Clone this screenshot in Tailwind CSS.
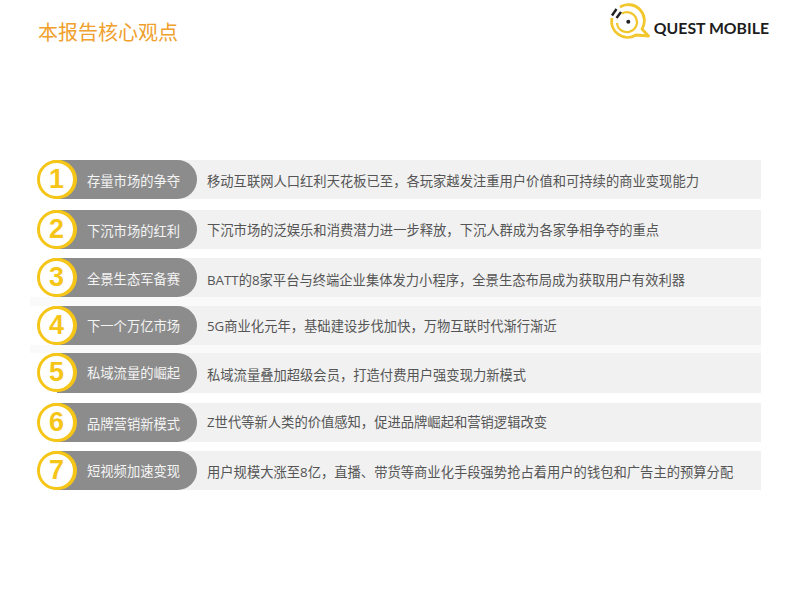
<!DOCTYPE html>
<html lang="zh-CN">
<head>
  <meta charset="UTF-8" />
  <title>本报告核心观点</title>
  <script src="https://cdn.jsdelivr.net/npm/@tailwindcss/browser@4"></script>
</head>
<body class="bg-white">
  <div class="relative w-[800px] h-[600px] overflow-hidden bg-white font-['Open_Sans','Noto_Sans_CJK_SC',sans-serif]">
    <!-- Header -->
    <header class="h-[160px] flex items-start justify-between pl-[38px] pr-[31px]">
      <h1 class="mt-[19px] text-[20px] leading-[28px] text-[#f0a02c]">本报告核心观点</h1>
      <div class="mt-[3px] flex items-start gap-[4px]">
        <svg width="40" height="36" viewBox="0 0 40 36" fill="none">
          <path d="M10 4A16 16 0 0 1 32 26L38.500 33L26 32A16 16 0 0 1 2 15" stroke="#f2c62d" stroke-width="2.800" stroke-linejoin="round" />
          <path d="M12 10.500A10 10 0 1 1 7 20" stroke="#f2c62d" stroke-width="2.200" />
          <circle cx="18.300" cy="18.700" r="2" fill="#222" />
          <path d="M2 12.500L6.500 6M6.500 15L11 9" stroke="#222" stroke-width="2.400" />
        </svg>
        <span class="mt-[15px] text-[15.8px] leading-[20px] font-bold text-[#1d1d1d] font-['Lato','Noto_Sans',sans-serif]">QUEST MOBILE</span>
      </div>
    </header>

    <!-- Rows -->
    <main class="ml-[37px] w-[724px] flex flex-col text-[13.3px]">
      <div class="relative h-[39px]">
        <div class="ml-[20px] h-full flex items-center bg-[#f1f1f1]">
          <div class="box-border w-[140px] h-full pl-[30px] pt-[4px] flex items-center rounded-r-[20px] bg-[#8c8c8c] text-[#f4f4f4]">存量市场的争夺</div>
          <span class="ml-[10px] mt-[4px] text-[#555]">移动互联网人口红利天花板已至，各玩家越发注重用户价值和可持续的商业变现能力</span>
        </div>
        <div class="absolute left-0 top-0 w-[39px] h-[39px] flex items-center justify-center rounded-full border-[3px] border-[#f5c518] shadow-[1px_0_0_#f5c518] bg-white text-[27px] font-bold text-[#f5c518] font-['Liberation_Sans',sans-serif]">1</div>
      </div>
      <div class="relative mt-[11px] h-[39px]">
        <div class="ml-[20px] h-full flex items-center bg-[#f1f1f1]">
          <div class="box-border w-[140px] h-full pl-[30px] pt-[4px] flex items-center rounded-r-[20px] bg-[#8c8c8c] text-[#f4f4f4]">下沉市场的红利</div>
          <span class="ml-[10px] mt-[2px] text-[#555]">下沉市场的泛娱乐和消费潜力进一步释放，下沉人群成为各家争相争夺的重点</span>
        </div>
        <div class="absolute left-0 top-0 w-[39px] h-[39px] flex items-center justify-center rounded-full border-[3px] border-[#f5c518] shadow-[1px_0_0_#f5c518] bg-white text-[27px] font-bold text-[#f5c518] font-['Liberation_Sans',sans-serif]">2</div>
      </div>
      <div class="relative mt-[9px] h-[39px]">
        <div class="ml-[20px] h-full flex items-center bg-[#f1f1f1]">
          <div class="box-border w-[140px] h-full pl-[30px] pt-[4px] flex items-center rounded-r-[20px] bg-[#8c8c8c] text-[#f4f4f4]">全景生态军备赛</div>
          <span class="ml-[10px] mt-[6px] text-[#555]">BATT的8家平台与终端企业集体发力小程序，全景生态布局成为获取用户有效利器</span>
        </div>
        <div class="absolute left-0 top-0 w-[39px] h-[39px] flex items-center justify-center rounded-full border-[3px] border-[#f5c518] shadow-[1px_0_0_#f5c518] bg-white text-[27px] font-bold text-[#f5c518] font-['Liberation_Sans',sans-serif]">3</div>
      </div>
      <!-- faint watermark band between rows -->
      <div class="h-[9px] ml-[-7px] bg-[#fafafa]"></div>
      <div class="relative h-[39px]">
        <div class="ml-[20px] h-full flex items-center bg-[#f1f1f1]">
          <div class="box-border w-[140px] h-full pl-[30px] pt-[2px] flex items-center rounded-r-[20px] bg-[#8c8c8c] text-[#f4f4f4]">下一个万亿市场</div>
          <span class="ml-[10px] mt-[2px] text-[#555]">5G商业化元年，基础建设步伐加快，万物互联时代渐行渐近</span>
        </div>
        <div class="absolute left-0 top-0 w-[39px] h-[39px] flex items-center justify-center rounded-full border-[3px] border-[#f5c518] shadow-[1px_0_0_#f5c518] bg-white text-[27px] font-bold text-[#f5c518] font-['Liberation_Sans',sans-serif]">4</div>
      </div>
      <div class="h-[8px] ml-[-7px] bg-[#fafafa]"></div>
      <div class="relative h-[40px]">
        <div class="ml-[20px] h-full flex items-center bg-[#f1f1f1]">
          <div class="box-border w-[140px] h-full pl-[30px] pt-[2px] flex items-center rounded-r-[20px] bg-[#8c8c8c] text-[#f4f4f4]">私域流量的崛起</div>
          <span class="ml-[10px] mt-[6px] text-[#555]">私域流量叠加超级会员，打造付费用户强变现力新模式</span>
        </div>
        <div class="absolute left-0 top-0 w-[39px] h-[39px] flex items-center justify-center rounded-full border-[3px] border-[#f5c518] shadow-[1px_0_0_#f5c518] bg-white text-[27px] font-bold text-[#f5c518] font-['Liberation_Sans',sans-serif]">5</div>
      </div>
      <div class="relative mt-[10px] h-[39px]">
        <div class="ml-[20px] h-full flex items-center bg-[#f1f1f1]">
          <div class="box-border w-[140px] h-full pl-[30px] pt-[4px] flex items-center rounded-r-[20px] bg-[#8c8c8c] text-[#f4f4f4]">品牌营销新模式</div>
          <span class="ml-[10px] text-[#555]">Z世代等新人类的价值感知，促进品牌崛起和营销逻辑改变</span>
        </div>
        <div class="absolute left-0 top-0 w-[39px] h-[39px] flex items-center justify-center rounded-full border-[3px] border-[#f5c518] shadow-[1px_0_0_#f5c518] bg-white text-[27px] font-bold text-[#f5c518] font-['Liberation_Sans',sans-serif]">6</div>
      </div>
      <div class="relative mt-[9px] h-[39px]">
        <div class="ml-[20px] h-full flex items-center bg-[#f1f1f1]">
          <div class="box-border w-[140px] h-full pl-[30px] pt-[2px] flex items-center rounded-r-[20px] bg-[#8c8c8c] text-[#f4f4f4]">短视频加速变现</div>
          <span class="ml-[10px] mt-[4px] text-[#555]">用户规模大涨至8亿，直播、带货等商业化手段强势抢占着用户的钱包和广告主的预算分配</span>
        </div>
        <div class="absolute left-0 top-0 w-[39px] h-[39px] flex items-center justify-center rounded-full border-[3px] border-[#f5c518] shadow-[1px_0_0_#f5c518] bg-white text-[27px] font-bold text-[#f5c518] font-['Liberation_Sans',sans-serif]">7</div>
      </div>
    </main>
  </div>
</body>
</html>
